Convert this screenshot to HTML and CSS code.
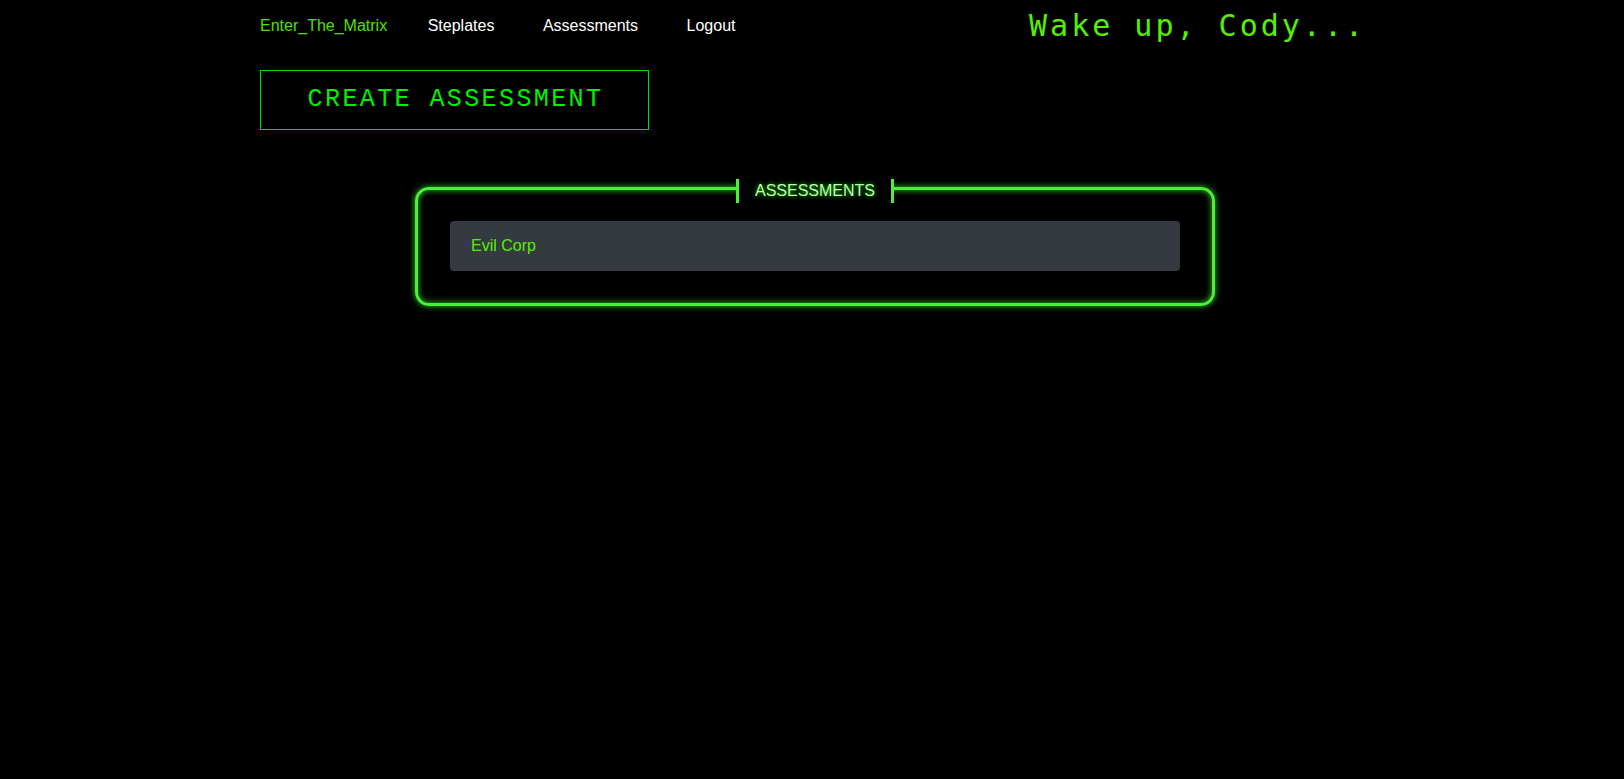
FILE: index.html
```html
<!DOCTYPE html>
<html lang="en">
<head>
<meta charset="utf-8">
<title>Assessments</title>
<link rel="stylesheet" href="styles.css">
</head>
<body>
<div class="container">
  <nav class="nav">
    <div class="nav-links">
      <a class="brand" href="#">Enter_The_Matrix</a>
      <a class="link link-first" href="#">Steplates</a>
      <a class="link" href="#">Assessments</a>
      <a class="link" href="#">Logout</a>
    </div>
    <div class="wake">Wake up, Cody...</div>
  </nav>
  <button class="create">CREATE ASSESSMENT</button>
  <fieldset class="panel">
    <legend class="panel-title">ASSESSMENTS</legend>
    <div class="row"><a class="row-link" href="#">Evil Corp</a></div>
  </fieldset>
</div>
</body>
</html>
```
FILE: styles.css
```css
html, body {
  margin: 0;
  padding: 0;
  background: #000;
  height: 100%;
}
body {
  font-family: "Liberation Sans", Arial, sans-serif;
  font-size: 16px;
  color: #fff;
}
a { text-decoration: none; }

.container {
  width: 1104px;
  margin: 0 auto;
}

.nav {
  display: flex;
  align-items: center;
  justify-content: space-between;
  padding-top: 8px;
  height: 35px;
}
.nav-links {
  display: flex;
  align-items: center;
}
.brand {
  color: #4fe000;
  line-height: 18px;
}
.link {
  color: #fff;
  line-height: 18px;
  margin-left: 48.5px;
}
.link-first { margin-left: 40.5px; }

.wake {
  font-family: "DejaVu Sans Mono", monospace;
  font-size: 30px;
  letter-spacing: 3px;
  margin-right: -2px;
  color: #55f000;
  line-height: 35px;
}

.create {
  display: flex;
  align-items: center;
  justify-content: center;
  box-sizing: border-box;
  width: 389px;
  height: 60px;
  margin-top: 27px;
  padding: 0 0 2px 2px;
  background: transparent;
  border: 1px solid #00e000;
  font-family: "Liberation Mono", monospace;
  font-size: 25px;
  letter-spacing: 2.4px;
  color: #00f000;
  cursor: pointer;
}

.panel {
  box-sizing: border-box;
  width: 800px;
  margin: 46px 0 0 155px;
  padding: 21px 32px 32px;
  border: 3px solid #4cf03a;
  border-radius: 14px;
  box-shadow: 0 0 6px #2ecc20, inset 0 0 6px #2ecc20;
}
.panel-title {
  position: relative;
  top: 3px;
  margin: 0 auto;
  padding: 0 16px;
  line-height: 24px;
  background: #000;
  border-left: 3px solid #4cf03a;
  border-right: 3px solid #4cf03a;
  color: #b8ffb0;
  text-shadow: 0 0 4px #22dd00;
}

.row {
  display: flex;
  align-items: center;
  height: 50px;
  padding: 0 21px;
  background: #343a40;
  border-radius: 4px;
}
.row-link {
  color: #55f000;
}
```
